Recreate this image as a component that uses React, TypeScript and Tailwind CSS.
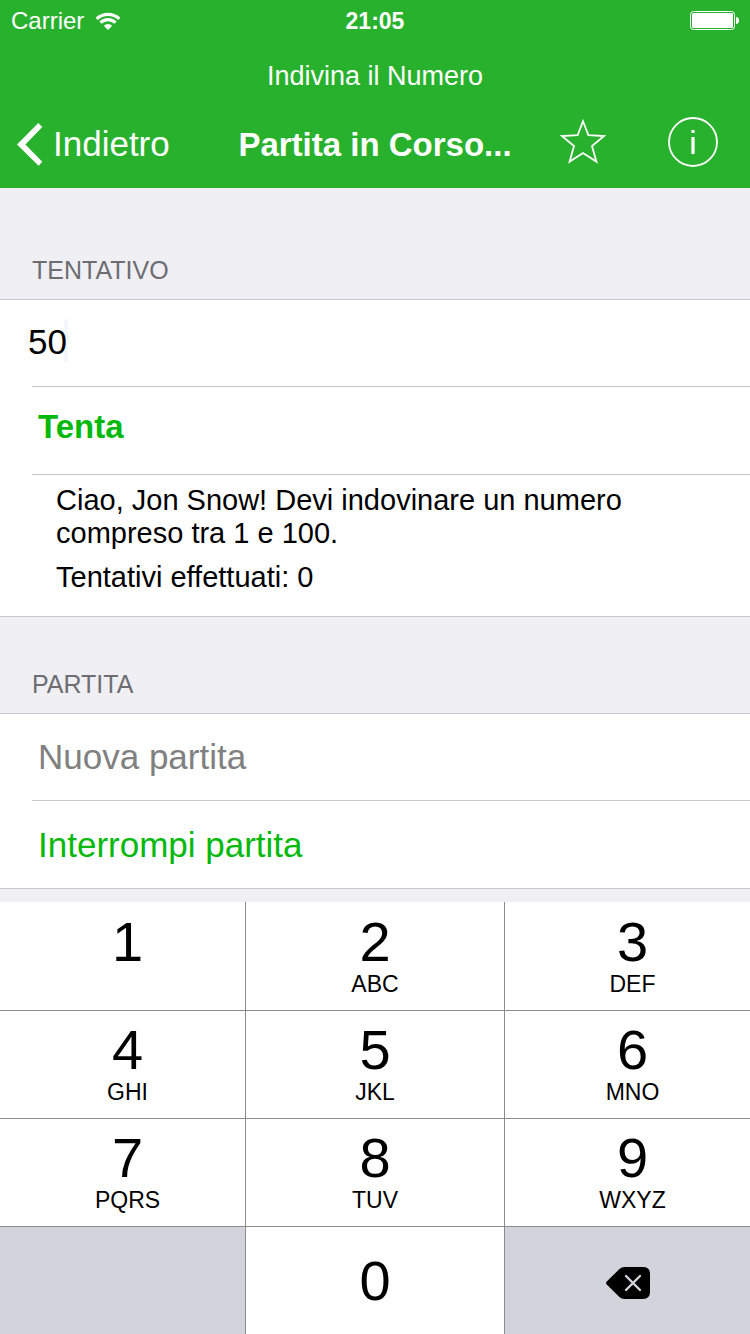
import React, { useState } from "react";

function WifiIcon() {
  return (
    <svg width="24" height="18" viewBox="0 0 24 18" fill="none" aria-hidden="true">
      <path d="M0.7 6.9A16.2 16.2 0 0 1 23.3 6.9" stroke="#fff" strokeWidth="3.2" />
      <path d="M4.5 10.7A10.6 10.6 0 0 1 19.5 10.7" stroke="#fff" strokeWidth="3.2" />
      <path d="M12 18L7.8 13.8A6 6 0 0 1 16.2 13.8Z" fill="#fff" />
    </svg>
  );
}

function BatteryIcon() {
  return (
    <svg width="49" height="19" viewBox="0 0 49 19" fill="none" aria-hidden="true">
      <rect x="0.5" y="0.5" width="44" height="18" rx="3" stroke="#fff" />
      <rect x="2" y="2" width="41" height="15" rx="1.5" fill="#fff" />
      <path d="M46 6C48 6 49 7.5 49 9.5S48 13 46 13Z" fill="#fff" />
    </svg>
  );
}

function BackIcon() {
  return (
    <svg width="26" height="43" viewBox="0 0 26 43" aria-hidden="true">
      <path d="M0 21.4L21.3 0L25.3 4L8.4 21.4L25.3 38.7L21.6 42.7Z" fill="#fff" />
    </svg>
  );
}

function StarIcon() {
  return (
    <svg width="48" height="50" viewBox="0 0 48 50" fill="none" aria-hidden="true">
      <path
        d="M24 4.2L29.4 18.2L45 19L33 29L37.4 44.6L24 36L10.6 44.6L15 29L3 19L18.6 18.2Z"
        stroke="#fff"
        strokeWidth="1.8"
        strokeMiterlimit="8"
      />
    </svg>
  );
}

function InfoIcon() {
  return (
    <svg width="50" height="50" viewBox="0 0 50 50" fill="none" aria-hidden="true">
      <circle cx="25" cy="25" r="24" stroke="#fff" strokeWidth="1.8" />
      <rect x="23.4" y="13" width="3.2" height="3" fill="#fff" />
      <rect x="23.4" y="20" width="3.2" height="17" fill="#fff" />
    </svg>
  );
}

function DeleteIcon() {
  return (
    <svg width="44" height="32" viewBox="0 0 44 32" fill="none" aria-hidden="true">
      <path
        d="M0.7 14.6L13.4 2.1Q15.5 0 18.5 0H37Q44 0 44 7V25Q44 32 37 32H18.5Q15.5 32 13.4 29.9L0.7 17.4Q-0.6 16 0.7 14.6Z"
        fill="#000"
      />
      <path d="M20 9L34 23M34 9L20 23" stroke="#d2d4dc" strokeWidth="2.4" strokeLinecap="round" />
    </svg>
  );
}

const KEYS: { digit: string; letters: string }[] = [
  { digit: "1", letters: "" },
  { digit: "2", letters: "ABC" },
  { digit: "3", letters: "DEF" },
  { digit: "4", letters: "GHI" },
  { digit: "5", letters: "JKL" },
  { digit: "6", letters: "MNO" },
  { digit: "7", letters: "PQRS" },
  { digit: "8", letters: "TUV" },
  { digit: "9", letters: "WXYZ" },
];

export default function App() {
  const [guess, setGuess] = useState("50");

  return (
    <div className="flex min-h-screen flex-col bg-[#efeff4] font-['Liberation_Sans',Arial,sans-serif] text-black">
      <header className="bg-[#28b12d] text-white">
        <div className="grid h-10 grid-cols-[1fr_auto_1fr] items-center px-[11px] pt-px text-[24px] leading-7">
          <div className="flex items-center gap-3">
            <span>Carrier</span>
            <WifiIcon />
          </div>
          <time className="text-[23px] font-bold">21:05</time>
          <div className="flex justify-end">
            <BatteryIcon />
          </div>
        </div>
        <p className="flex h-18 items-center justify-center text-[27px] leading-8">Indivina il Numero</p>
        <nav className="grid h-19 grid-cols-[1fr_auto_1fr] items-center pb-3">
          <a href="#indietro" className="flex items-center gap-2.5 pl-[17px] text-[35px] leading-10">
            <BackIcon />
            Indietro
          </a>
          <h1 className="pt-0.5 text-[33px] leading-10 font-bold">Partita in Corso...</h1>
          <div className="flex items-center justify-end gap-[61px] pr-8 pb-1">
            <button type="button" aria-label="Preferiti">
              <StarIcon />
            </button>
            <button type="button" aria-label="Informazioni">
              <InfoIcon />
            </button>
          </div>
        </nav>
      </header>

      <main className="pb-3">
        <section>
          <h2 className="px-8 pt-[66px] pb-[13px] text-[25px] leading-8">
            <label htmlFor="tentativo" className="text-[#6d6d72]">
              TENTATIVO
            </label>
          </h2>
          <div className="border-y border-[#c8c7cc] bg-white">
            <div className="relative flex h-[86px] items-center pb-0.5 pl-7">
              <span className="absolute top-[19px] left-16 h-[43px] w-1 bg-[#f5f7ff]" />
              <input
                id="tentativo"
                type="text"
                inputMode="numeric"
                value={guess}
                onChange={(e) => setGuess(e.target.value)}
                className="relative w-full bg-transparent text-[35px] leading-10 outline-none"
              />
            </div>
            <div className="ml-8 border-t border-[#c8c7cc]">
              <button type="button" className="h-[87px] w-full px-1.5 pb-2 text-left text-[33px] leading-10 font-bold text-[#04b90b]">
                Tenta
              </button>
            </div>
            <div className="ml-8 border-t border-[#c8c7cc] px-6 pt-[9px] pb-[22px] text-[29px] leading-[33px]">
              <p className="max-w-150">Ciao, Jon Snow! Devi indovinare un numero compreso tra 1 e 100.</p>
              <p className="mt-[11px]">Tentativi effettuati: 0</p>
            </div>
          </div>
        </section>

        <section>
          <h2 className="px-8 pt-[51px] pb-[13px] text-[25px] leading-8 text-[#6d6d72]">PARTITA</h2>
          <div className="border-y border-[#c8c7cc] bg-white text-[35px] leading-10">
            <button type="button" className="h-[86px] w-full px-[38px] text-left text-[#808080]">
              Nuova partita
            </button>
            <div className="ml-8 border-t border-[#c8c7cc]">
              <button type="button" className="h-[87px] w-full px-1.5 text-left text-[#04b90b]">
                Interrompi partita
              </button>
            </div>
          </div>
        </section>
      </main>

      <div className="mt-auto grid grid-cols-[245fr_258fr_245fr] gap-px bg-[#8c8c8c]">
        {KEYS.map(({ digit, letters }, i) => (
          <button
            key={digit}
            type="button"
            onClick={() => setGuess((g) => g + digit)}
            className={`flex flex-col items-center bg-white ${i < 3 ? "h-[108px] pt-[11px]" : "h-[107px] pt-2.5"} ${i % 3 === 1 ? "" : "pl-2.5"}`}
          >
            <span className="text-[56px] leading-[58px]">{digit}</span>
            <span className="mt-px text-[23px] leading-6">{letters}</span>
          </button>
        ))}
        <div className="bg-[#d2d4dc]" />
        <button
          type="button"
          onClick={() => setGuess((g) => g + "0")}
          className="flex h-[107px] items-center justify-center bg-white text-[56px] leading-[58px]"
        >
          0
        </button>
        <button
          type="button"
          aria-label="Cancella"
          onClick={() => setGuess((g) => g.slice(0, -1))}
          className="flex items-center justify-center bg-[#d2d4dc] pt-1"
        >
          <DeleteIcon />
        </button>
      </div>
    </div>
  );
}
